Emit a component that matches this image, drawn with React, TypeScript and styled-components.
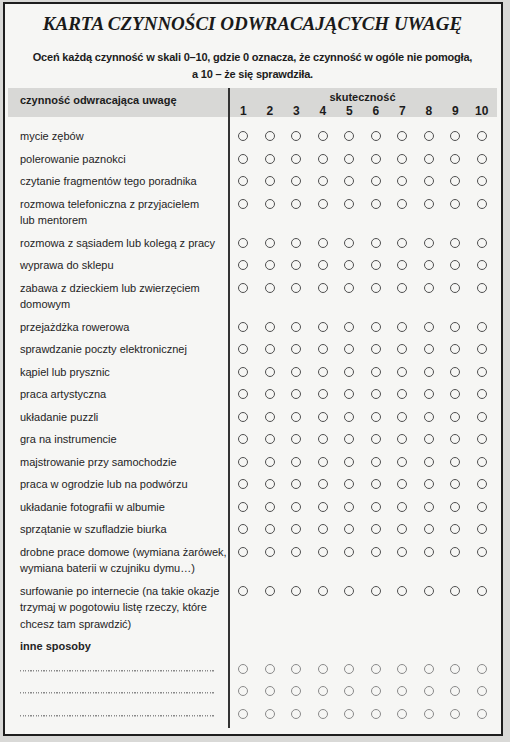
import React from 'react'
import styled, { createGlobalStyle } from 'styled-components'

const GlobalStyle = createGlobalStyle`
  html, body {
    margin: 0;
    padding: 0;
    background: #d9d9d7;
  }
  body {
    padding: 2px 0 0 3px;
    font-family: "Liberation Sans", Arial, sans-serif;
  }
  * {
    box-sizing: border-box;
  }
`

const activities: string[][] = [
  ['mycie zębów'],
  ['polerowanie paznokci'],
  ['czytanie fragmentów tego poradnika'],
  ['rozmowa telefoniczna z przyjacielem', 'lub mentorem'],
  ['rozmowa z sąsiadem lub kolegą z pracy'],
  ['wyprawa do sklepu'],
  ['zabawa z dzieckiem lub zwierzęciem', 'domowym'],
  ['przejażdżka rowerowa'],
  ['sprawdzanie poczty elektronicznej'],
  ['kąpiel lub prysznic'],
  ['praca artystyczna'],
  ['układanie puzzli'],
  ['gra na instrumencie'],
  ['majstrowanie przy samochodzie'],
  ['praca w ogrodzie lub na podwórzu'],
  ['układanie fotografii w albumie'],
  ['sprzątanie w szufladzie biurka'],
  ['drobne prace domowe (wymiana żarówek,', 'wymiana baterii w czujniku dymu…)'],
  ['surfowanie po internecie (na takie okazje', 'trzymaj w pogotowiu listę rzeczy, które', 'chcesz tam sprawdzić)'],
]

const scale = [1, 2, 3, 4, 5, 6, 7, 8, 9, 10]

const App = () => {
  return (
    <>
      <GlobalStyle />
      <Page>
        <Title>KARTA CZYNNOŚCI ODWRACAJĄCYCH UWAGĘ</Title>
        <Intro>
          Oceń każdą czynność w skali 0–10, gdzie 0 oznacza, że czynność w ogóle nie pomogła,
          <br />a 10 – że się sprawdziła.
        </Intro>
        <Table>
          <HeadRow>
            <HeadLabel>czynność odwracająca uwagę</HeadLabel>
            <HeadScale>
              <ScaleTitle>skuteczność</ScaleTitle>
              <Numbers>
                {scale.map((n) => (
                  <Num key={n}>{n}</Num>
                ))}
              </Numbers>
            </HeadScale>
          </HeadRow>
          <Row>
            <LeftCell $h={8} />
            <div />
          </Row>
          {activities.map((lines, i) => (
            <Row key={i}>
              <Label>
                {lines.map((l, j) => (
                  <div key={j}>{l}</div>
                ))}
              </Label>
              <Circles>
                {scale.map((n) => (
                  <Dot key={n} />
                ))}
              </Circles>
            </Row>
          ))}
          <Row>
            <Label $bold>inne sposoby</Label>
            <div />
          </Row>
          {[0, 1, 2].map((i) => (
            <Row key={'o' + i}>
              <Label>
                <Dotted />
              </Label>
              <Circles>
                {scale.map((n) => (
                  <Dot key={n} $faint />
                ))}
              </Circles>
            </Row>
          ))}
          <Row>
            <LeftCell $h={3} />
            <div />
          </Row>
        </Table>
      </Page>
    </>
  )
}

export default App

const Page = styled.div`
  width: 500px;
  height: 734px;
  border: 2px solid #1e1e1e;
  background: #f6f6f4;
  display: flex;
  flex-direction: column;
  padding: 0 4px 0 3px;
`

const Title = styled.div`
  margin-top: 8px;
  font-family: "Liberation Serif", "Times New Roman", serif;
  font-style: italic;
  font-weight: 700;
  font-size: 19px;
  line-height: 24px;
  text-align: center;
  color: #1a1a1a;
`

const Intro = styled.div`
  margin-top: 13px;
  font-weight: 700;
  font-size: 11px;
  letter-spacing: -0.2px;
  line-height: 17px;
  text-align: center;
  color: #1c1c1c;
`

const Table = styled.div`
  margin-top: 5px;
  display: flex;
  flex-direction: column;
  color: #242424;
`

const HeadRow = styled.div`
  display: grid;
  grid-template-columns: 222px 265px;
  background: #d8d8d6;
  height: 29px;
`

const HeadLabel = styled.div`
  border-right: 2px solid #333;
  padding: 5px 0 0 12px;
  font-weight: 700;
  font-size: 11px;
  line-height: 14px;
  color: #1c1c1c;
`

const HeadScale = styled.div`
  padding-top: 2px;
  font-weight: 700;
  color: #1c1c1c;
`

const ScaleTitle = styled.div`
  text-align: center;
  font-size: 11px;
  line-height: 14px;
`

const Numbers = styled.div`
  display: grid;
  grid-template-columns: repeat(10, 1fr);
`

const Num = styled.div`
  text-align: center;
  font-size: 12px;
  line-height: 14px;
`

const Row = styled.div`
  display: grid;
  grid-template-columns: 222px 265px;
`

const LeftCell = styled.div<{ $h: number }>`
  height: ${(p) => p.$h}px;
  border-right: 2px solid #333;
`

const Label = styled.div<{ $bold?: boolean }>`
  border-right: 2px solid #333;
  padding: 3px 0 3px 12px;
  font-size: 11px;
  line-height: 16.5px;
  font-weight: ${(p) => (p.$bold ? 700 : 400)};
`

const Circles = styled.div`
  display: grid;
  grid-template-columns: repeat(10, 1fr);
  align-items: start;
  padding-top: 6px;
`

const Dot = styled.span<{ $faint?: boolean }>`
  justify-self: center;
  width: 10px;
  height: 10px;
  border-radius: 50%;
  border: 1px solid ${(p) => (p.$faint ? '#8a8a8a' : '#505050')};
`

const Dotted = styled.div`
  width: 195px;
  height: 16.5px;
  background: repeating-linear-gradient(to right, #8a8a8a 0 1.2px, transparent 1.2px 2.6px) left 9px / 100% 1.5px no-repeat;
`
